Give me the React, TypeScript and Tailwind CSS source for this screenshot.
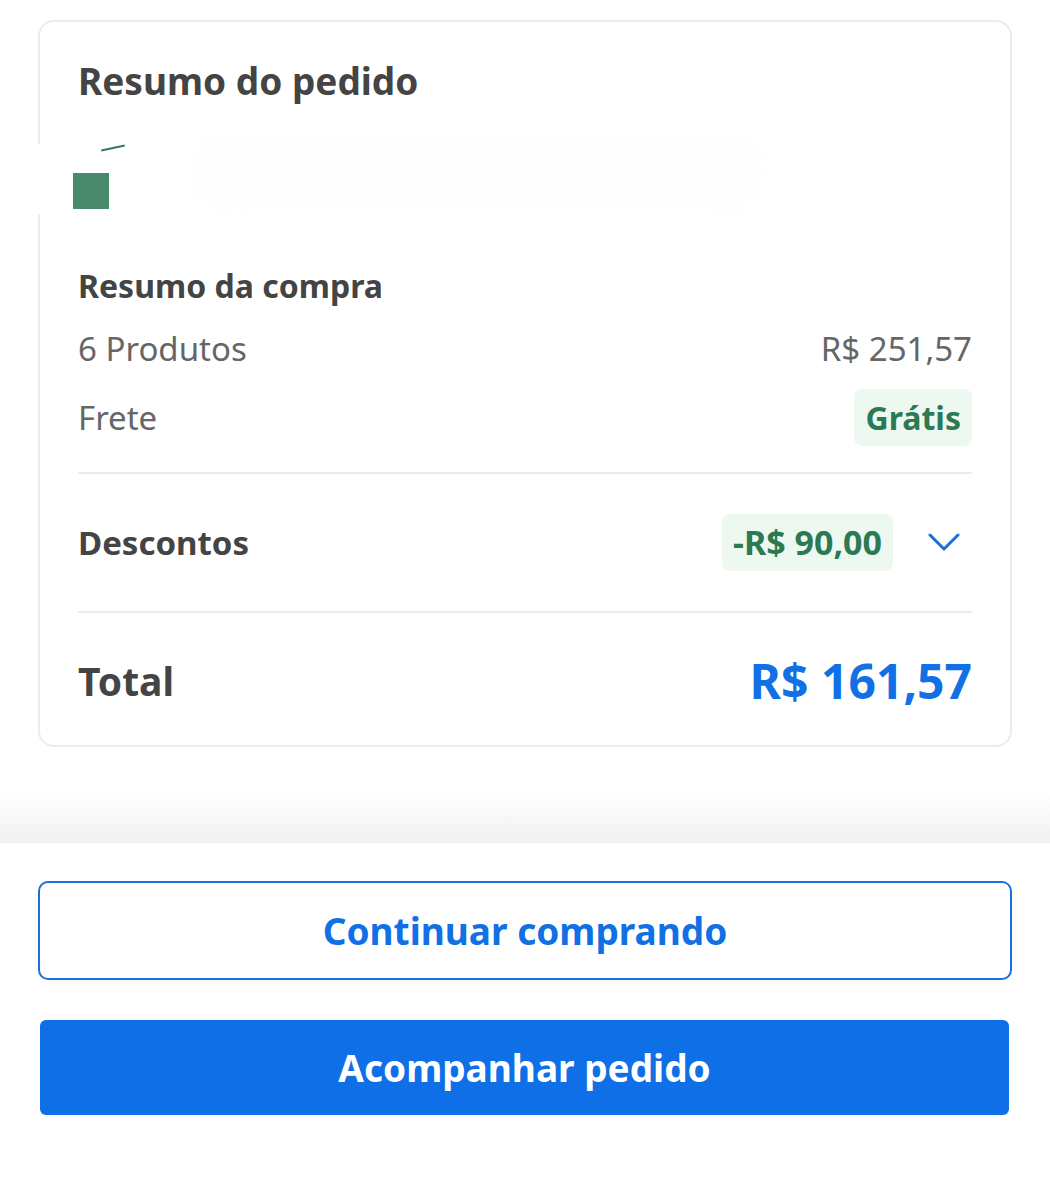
const font = { fontFamily: '"Noto Sans", "Open Sans", sans-serif' };

function Badge({ children }: { children: React.ReactNode }) {
  return (
    <span className="inline-flex items-center rounded-lg bg-[#edf8f1] px-[11px] h-[57px] font-bold text-[#2c7a53]">
      {children}
    </span>
  );
}

export default function App() {
  return (
    <div className="min-h-[1200px] bg-white" style={font}>
      <div className="px-[38px] pt-[20px]">
        <div className="rounded-2xl border-2 border-[#ececec] bg-white px-[38px] pt-[37px] pb-[36px]">
          <h2 className="text-[37px] leading-[44px] font-bold text-[#444444]">Resumo do pedido</h2>

          {/* product thumbnails (blurred in the reference) */}
          <div className="relative mt-[26px] mb-[52px] h-[85px]">
            <div className="absolute -left-[44px] top-[15px] h-[70px] w-[180px] bg-white" />
            <div className="absolute left-[23px] top-[18px] h-[2px] w-[24px] -rotate-12 bg-[#2f7a59]" />
            <div className="absolute -left-[5px] top-[44px] h-[36px] w-[36px] bg-[#4a8a6c]" />
            <div className="absolute left-[120px] top-[14px] h-[60px] w-[560px] rounded-full bg-[#fcfdfc] blur-md" />
          </div>

          <h3 className="text-[32px] leading-[40px] font-bold text-[#444444]">Resumo da compra</h3>

          <div className="mt-[23px] flex items-center justify-between text-[33px] leading-[40px] text-[#666666]">
            <span>6 Produtos</span>
            <span>R$ 251,57</span>
          </div>

          <div className="mt-[20px] flex items-center justify-between text-[33px] text-[#666666]">
            <span>Frete</span>
            <span className="text-[32px]">
              <Badge>Grátis</Badge>
            </span>
          </div>

          <div className="mt-[26px] h-[2px] bg-[#ebebeb]" />

          <div className="mt-[40px] flex items-center justify-between">
            <span className="text-[33px] font-bold text-[#444444]">Descontos</span>
            <div className="flex items-center">
              <span className="text-[34px]">
                <Badge>-R$ 90,00</Badge>
              </span>
              <svg className="ml-[35px] mr-[12px]" width="32" height="19" viewBox="0 0 32 19" fill="none">
                <path d="M2 2 L16 16 L30 2" stroke="#1a6fdc" strokeWidth="3" strokeLinecap="round" strokeLinejoin="round" />
              </svg>
            </div>
          </div>

          <div className="mt-[40px] h-[2px] bg-[#ebebeb]" />

          <div className="mt-[40px] flex items-center justify-between leading-[56px]">
            <span className="text-[39px] font-bold text-[#444444]">Total</span>
            <span className="text-[48px] font-bold text-[#1170e4]">R$ 161,57</span>
          </div>
        </div>
      </div>

      <div className="mt-[43px] h-[53px] bg-gradient-to-b from-white to-[#f1f1f1]" />

      <div className="bg-white px-[38px] pt-[38px] pb-[85px]">
        <button className="flex h-[99px] w-full items-center justify-center rounded-[10px] border-2 border-[#1a6fdc] bg-white text-[37px] font-bold text-[#1170e4]">
          Continuar comprando
        </button>
        <button className="mx-[2px] mt-[40px] flex h-[95px] w-[969px] items-center justify-center rounded-md bg-[#0f6fe6] text-[37px] font-bold text-white">
          Acompanhar pedido
        </button>
      </div>
    </div>
  );
}
